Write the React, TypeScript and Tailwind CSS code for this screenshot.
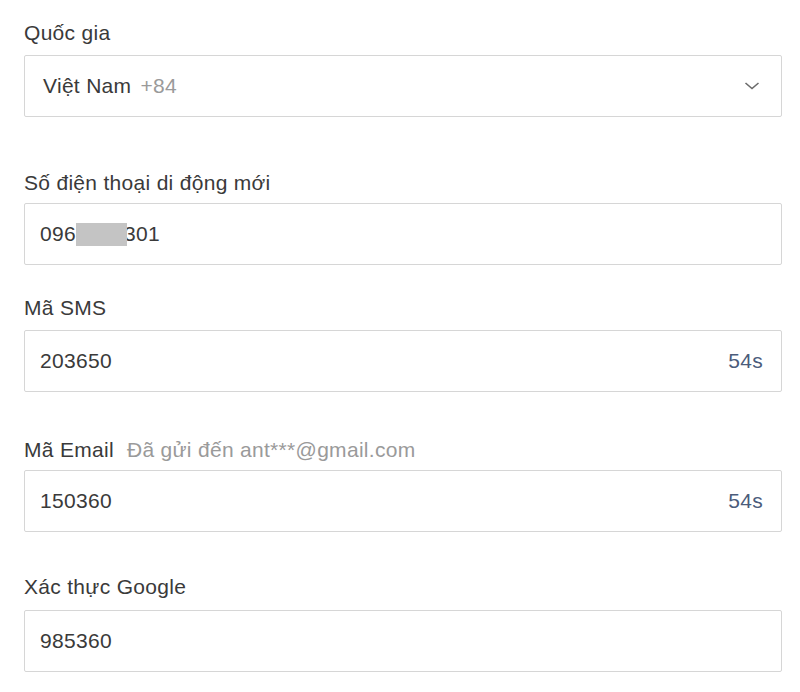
import { ReactNode } from "react"

// Form đổi số điện thoại - các ô nhập liệu
const font = { fontFamily: '"Liberation Sans", Arial, sans-serif' }

function Field({
  label,
  hint,
  children,
  right,
  className,
  labelGap,
}: {
  label: string
  hint?: string
  children: ReactNode
  right?: ReactNode
  className?: string
  labelGap?: string
}) {
  return (
    <div className={className}>
      <div className={`flex items-baseline text-[21px] leading-[24px] tracking-[0.3px] text-[#3a3a3a] ${labelGap ?? "mb-[10px]"}`}>
        <span>{label}</span>
        {hint && <span className="ml-[13px] text-[#9a9a9a]">{hint}</span>}
      </div>
      <div className="flex h-[62px] items-center justify-between rounded-[2px] border border-[#d6d6d6] bg-white pl-[15px] pr-[18px] text-[21px] tracking-[0.3px] text-[#3a3a3a]">
        <div className="flex items-center">{children}</div>
        {right}
      </div>
    </div>
  )
}

function Chevron() {
  return (
    <svg width="18" height="10" viewBox="0 0 18 10" className="mr-[2px]">
      <polyline points="2.5,2 9,7.5 15.5,2" fill="none" stroke="#6b6b6b" strokeWidth="1.6" />
    </svg>
  )
}

export default function App() {
  return (
    <div className="min-h-[692px] w-[800px] bg-white pl-[24px] pr-[18px] pt-[21px]" style={font}>
      <Field label="Quốc gia" right={<Chevron />}>
        <span className="ml-[3px]">Việt Nam</span>
        <span className="ml-[9px] text-[#9a9a9a]">+84</span>
      </Field>

      <Field label="Số điện thoại di động mới" className="mt-[54px]" labelGap="mb-[8px]">
        <span>096</span>
        <span className="relative z-10 inline-block h-[23px] w-[51px] bg-[#c4c4c4]" />
        <span className="-ml-[3px]">301</span>
      </Field>

      <Field
        label="Mã SMS"
        className="mt-[31px]"
        right={<span className="text-[#4b5c7b]">54s</span>}
      >
        <span>203650</span>
      </Field>

      <Field
        label="Mã Email"
        hint="Đã gửi đến ant***@gmail.com"
        className="mt-[46px]"
        labelGap="mb-[8px]"
        right={<span className="text-[#4b5c7b]">54s</span>}
      >
        <span>150360</span>
      </Field>

      <Field label="Xác thực Google" className="mt-[43px]" labelGap="mb-[11px]">
        <span>985360</span>
      </Field>
    </div>
  )
}
